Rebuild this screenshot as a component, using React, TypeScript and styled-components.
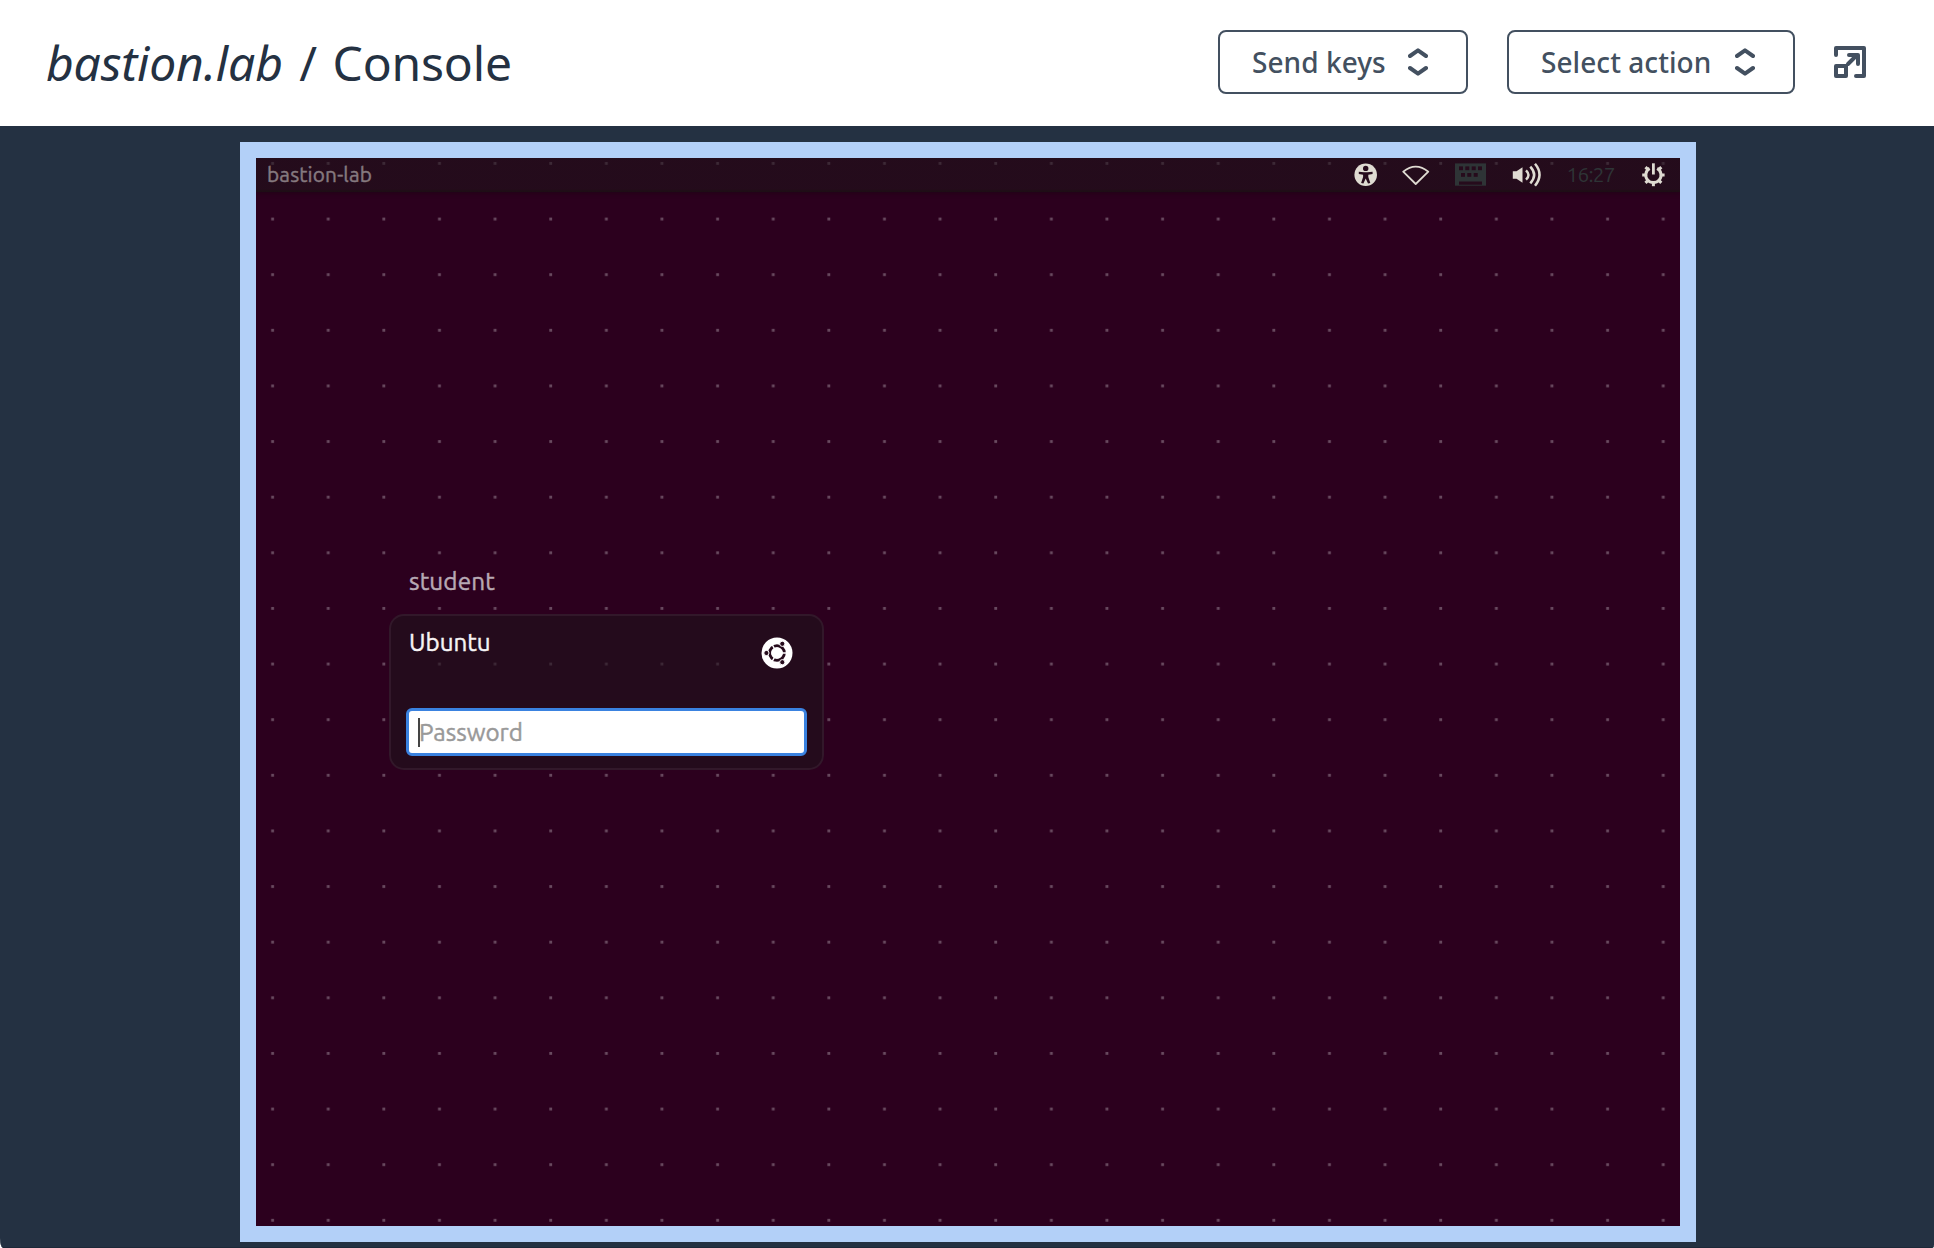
import React from "react";
import styled, { createGlobalStyle } from "styled-components";

const Global = createGlobalStyle`
  * { box-sizing: border-box; }
  html, body { margin: 0; height: 100%; background: #fff; }
  body { overflow: hidden; }
`;

const Page = styled.div`
  width: 1934px;
  height: 1248px;
  display: flex;
  flex-direction: column;
  font-family: "Noto Sans", sans-serif;
`;

const Header = styled.header`
  height: 126px;
  flex: none;
  display: flex;
  align-items: center;
  background: #fff;
  padding: 0 67px 0 46px;
`;

const Title = styled.h1`
  margin: 0;
  flex: 1;
  display: flex;
  font-size: 48px;
  font-weight: 400;
  line-height: 60px;
  letter-spacing: -0.17px;
  color: #243142;
  white-space: nowrap;
`;

const HostCrumb = styled.em`
  margin-right: 16.5px;
`;

const PageCrumb = styled.span`
  margin-left: 15.5px;
`;

const Actions = styled.div`
  display: flex;
  align-items: center;
  gap: 39px;
  margin-bottom: 2px;
`;

const MenuButton = styled.button<{ $width: number }>`
  width: ${(p) => p.$width}px;
  height: 64px;
  padding: 0 38px 0 32px;
  display: flex;
  align-items: center;
  justify-content: space-between;
  border: 2px solid #435060;
  border-radius: 8px;
  background: #fff;
  color: #435060;
  font: 500 28px/38px "Noto Sans", sans-serif;
  letter-spacing: 0.06px;
  white-space: nowrap;
`;

const IconButton = styled.button`
  width: 34px;
  height: 34px;
  margin-left: -1px;
  padding: 0;
  border: 0;
  background: none;
  color: #435060;
  display: flex;
`;

const Stage = styled.main`
  flex: 1;
  min-height: 0;
  display: flex;
  justify-content: center;
  align-items: flex-start;
  padding: 16px 0 0 2px;
  background: #243142;
  border-bottom: 1px solid #1d2838;
  border-radius: 0 0 2px 3px / 0 0 3px 10px;
`;

const Frame = styled.section`
  border: 16px solid #b3d0f8;
  width: 1456px;
  height: 1100px;
`;

const Desktop = styled.div`
  position: relative;
  height: 100%;
  overflow: hidden;
  background: #2c001e;
  display: flex;
  flex-direction: column;
  align-items: flex-start;
  font-family: Ubuntu, "Noto Sans", sans-serif;
  font-weight: 400;
  -webkit-text-stroke: 0.45px currentColor;
`;

const Dots = styled.svg`
  position: absolute;
  inset: 0;
  width: 100%;
  height: 100%;
`;

const Panel = styled.div`
  position: relative;
  width: 100%;
  height: 34px;
  flex: none;
  display: flex;
  align-items: center;
  justify-content: space-between;
  background: linear-gradient(rgba(31, 19, 26, 0.6) 31px, rgba(28, 16, 20, 0.85) 33px);
  box-shadow: 0 1px 4px rgba(20, 8, 14, 0.5);
  color: #85797f;
`;

const HostName = styled.span`
  padding-left: 11px;
  font-size: 20.8px;
  line-height: 32px;
  letter-spacing: 0.14px;
`;

const Tray = styled.svg`
  width: 340px;
  height: 34px;
`;

const Login = styled.div`
  position: relative;
  margin: 371px 0 0 133px;
  width: 435px;
  display: flex;
  flex-direction: column;
`;

const UserName = styled.div`
  height: 51px;
  padding-left: 20px;
  color: #b7a9b4;
  font-size: 24.3px;
  line-height: 36px;
  letter-spacing: 0.12px;
`;

const Card = styled.div`
  height: 156px;
  padding: 8px 15px 0;
  border: 2px solid #32182a;
  border-radius: 15px;
  background: rgba(31, 19, 26, 0.6);
`;

const SessionRow = styled.div`
  height: 84px;
  display: flex;
  justify-content: space-between;
  padding: 0 14px 0 3px;
  color: #f6f4f5;
  font-size: 24.2px;
  line-height: 36px;
`;

const Logo = styled.svg`
  width: 32px;
  height: 32px;
  margin-top: 13px;
`;

const Field = styled.div`
  width: 401px;
  height: 48px;
  display: flex;
  align-items: center;
  padding-left: 9px;
  border: 3px solid #3a82e0;
  border-radius: 6px;
  background: #fff;
  color: #999;
  font-size: 24.2px;
  line-height: 36px;
`;

const Caret = styled.span`
  width: 2px;
  height: 29px;
  margin-right: -1px;
  background: #444;
`;

function Chevrons() {
  return (
    <svg width="20" height="28" viewBox="0 0 20 28" fill="none" stroke="currentColor" strokeWidth="4" strokeLinecap="round" strokeLinejoin="round">
      <path d="M2 8 10 2.4 18 8M2 20l8 5.6L18 20" />
    </svg>
  );
}

function ExpandIcon() {
  return (
    <svg width="34" height="34" viewBox="0 0 34 34" fill="none" stroke="currentColor" strokeWidth="4" strokeLinecap="round" strokeLinejoin="round">
      <path d="M3 10V3H31V31H23M3 21H13V31H3ZM15 19 24 10M16 10H25V19" />
    </svg>
  );
}

const CUT = "#260b1c";
const TRAY = "#dfdbd2";
const MUTED = "#2e3436";
const KEYS: [number, number][] = [
  [1459, 166.4], [1465.3, 166.4], [1471.7, 166.4], [1478, 166.4],
  [1461, 173], [1467.3, 173], [1473.7, 173],
];
const GEAR_TEETH = [45, 90, 135, 180, 225, 270, 315];

function StatusTray() {
  return (
    <Tray viewBox="1340 158 340 34" fill={TRAY}>
      <circle cx="1365.7" cy="174.7" r="11.3" />
      <g fill={CUT}>
        <circle cx="1365.7" cy="168.4" r="2.7" />
        <path d="M1358.8 171.8 L1364 172.3 H1367.4 L1372.6 171.8 V174 L1368.3 174.8 V177 L1370.3 183 L1368 183.6 L1365.7 178.6 L1363.4 183.6 L1361.1 183 L1363.1 177 V174.8 L1358.8 174Z" />
      </g>
      <path d="M1403.2 171.7 Q1415.7 161.6 1428.3 171.7 L1415.7 184Z" fill="none" stroke={TRAY} strokeWidth="1.8" strokeLinejoin="round" />
      <rect x="1455" y="163.4" width="31" height="22.3" fill={MUTED} />
      <g fill={CUT}>
        {KEYS.map(([x, y]) => (
          <rect key={`${x}-${y}`} x={x} y={y} width="4" height="3.8" />
        ))}
        <rect x="1459" y="181.5" width="23" height="3.2" />
      </g>
      <path d="M1512.8 171.3h3.7l6-4v15.4l-6-4h-3.7z" />
      <path d="M1526 170.3Q1531 175 1526 179.700M1530.3 166.7Q1538 175 1530.3 183.3M1535 163.7Q1544 174.5 1535 185.7" fill="none" stroke={TRAY} strokeWidth="2.5" />
      <text x="1566.5" y="181.6" fontFamily='Ubuntu, "Noto Sans", sans-serif' fontSize="20.8" textLength="49" fill={MUTED}>16:27</text>
      <g fill="none" stroke={TRAY}>
        <path d="M1649.6 168.4A7.6 7.6 0 1 0 1657.2 168.4" strokeWidth="3" />
        <path d="M1653.4 163.3V174.5" strokeWidth="2.8" />
        {GEAR_TEETH.map((angle) => (
          <path key={angle} d="M1653.4 167V163.8" strokeWidth="3" transform={`rotate(${angle} 1653.4 175)`} />
        ))}
      </g>
    </Tray>
  );
}

function UbuntuLogo() {
  return (
    <Logo viewBox="0 0 32 32">
      <circle cx="16" cy="16" r="15.5" fill="#fff" />
      <circle cx="16" cy="16" r="7.3" fill="none" stroke={CUT} strokeWidth="3" />
      <path d="M16 16H28M16 16L10 5.6M16 16L10 26.4" stroke="#fff" strokeWidth="1.5" />
      <g fill={CUT} stroke="#fff" strokeWidth="1">
        <circle cx="5.4" cy="16" r="2.6" />
        <circle cx="21.3" cy="6.8" r="2.6" />
        <circle cx="21.3" cy="25.2" r="2.6" />
      </g>
      <circle cx="16" cy="16" r="5.8" fill="#fff" />
    </Logo>
  );
}

export default function App() {
  return (
    <Page>
      <Global />
      <Header>
        <Title>
          <HostCrumb>bastion.lab</HostCrumb>
          <span>/</span>
          <PageCrumb>Console</PageCrumb>
        </Title>
        <Actions>
          <MenuButton $width={250}>Send keys<Chevrons /></MenuButton>
          <MenuButton $width={288}>Select action<Chevrons /></MenuButton>
          <IconButton aria-label="Full screen"><ExpandIcon /></IconButton>
        </Actions>
      </Header>
      <Stage>
        <Frame>
          <Desktop>
            <Dots>
              <defs>
                <pattern id="dots" width="55.625" height="55.625" patternUnits="userSpaceOnUse">
                  <rect x="15.2" y="4" width="2.8" height="2.8" fill="#694b60" />
                </pattern>
              </defs>
              <rect width="1424" height="1068" fill="url(#dots)" />
            </Dots>
            <Panel>
              <HostName>bastion-lab</HostName>
              <StatusTray />
            </Panel>
            <Login>
              <UserName>student</UserName>
              <Card>
                <SessionRow>
                  Ubuntu
                  <UbuntuLogo />
                </SessionRow>
                <Field><Caret />Password</Field>
              </Card>
            </Login>
          </Desktop>
        </Frame>
      </Stage>
    </Page>
  );
}
